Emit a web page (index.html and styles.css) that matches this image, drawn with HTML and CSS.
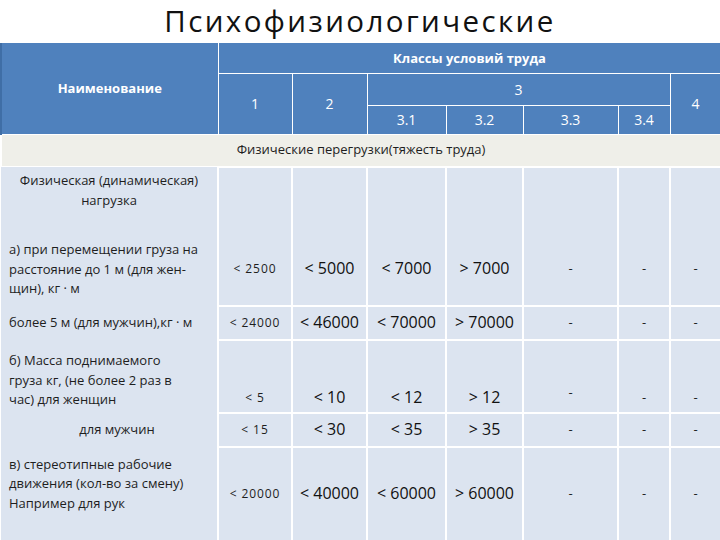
FILE: index.html
```html
<!DOCTYPE html>
<html lang="ru">
<head>
<meta charset="utf-8">
<title>Психофизиологические</title>
<link rel="stylesheet" href="styles.css">
</head>
<body>
<h1 class="title">Психофизиологические</h1>
<table class="grid">
  <colgroup>
    <col class="c-name"><col class="c-1"><col class="c-2"><col class="c-31"><col class="c-32"><col class="c-33"><col class="c-34"><col class="c-4">
  </colgroup>
  <thead>
    <tr class="h-row1">
      <th rowspan="3" class="h-name">Наименование</th>
      <th colspan="7" class="h-classes">Классы условий труда</th>
    </tr>
    <tr class="h-row2">
      <th rowspan="2">1</th>
      <th rowspan="2">2</th>
      <th colspan="4">3</th>
      <th rowspan="2">4</th>
    </tr>
    <tr class="h-row3">
      <th>3.1</th><th>3.2</th><th>3.3</th><th>3.4</th>
    </tr>
  </thead>
  <tbody>
    <tr class="section">
      <td colspan="8">Физические перегрузки(тяжесть труда)</td>
    </tr>
    <tr class="r-1a open-bottom">
      <td class="label centered top">Физическая (динамическая)<br>нагрузка</td>
      <td></td><td></td><td></td><td></td><td></td><td></td><td></td>
    </tr>
    <tr class="r-1b open-top">
      <td class="label">а) при перемещении груза на<br>расстояние до 1 м (для жен-<br>щин), кг · м</td>
      <td class="v-small">&lt; 2500</td>
      <td class="v">&lt; 5000</td>
      <td class="v">&lt; 7000</td>
      <td class="v">&gt; 7000</td>
      <td class="dash">-</td><td class="dash">-</td><td class="dash">-</td>
    </tr>
    <tr class="r-2">
      <td class="label">более 5 м (для мужчин),кг · м</td>
      <td class="v-small">&lt; 24000</td>
      <td class="v">&lt; 46000</td>
      <td class="v">&lt; 70000</td>
      <td class="v">&gt; 70000</td>
      <td class="dash">-</td><td class="dash">-</td><td class="dash">-</td>
    </tr>
    <tr class="r-3 bottom-row">
      <td class="label">б) Масса поднимаемого<br>груза кг, (не более 2 раз в<br>час) для женщин</td>
      <td class="v-small">&lt; 5</td>
      <td class="v">&lt; 10</td>
      <td class="v">&lt; 12</td>
      <td class="v">&gt; 12</td>
      <td class="dash raised">-</td><td class="dash">-</td><td class="dash">-</td>
    </tr>
    <tr class="r-4">
      <td class="label centered shifted">для мужчин</td>
      <td class="v-small">&lt; 15</td>
      <td class="v">&lt; 30</td>
      <td class="v">&lt; 35</td>
      <td class="v">&gt; 35</td>
      <td class="dash">-</td><td class="dash">-</td><td class="dash">-</td>
    </tr>
    <tr class="r-5">
      <td class="label top">в) стереотипные рабочие<br>движения (кол-во за смену)<br>Например для рук</td>
      <td class="v-small">&lt; 20000</td>
      <td class="v">&lt; 40000</td>
      <td class="v">&lt; 60000</td>
      <td class="v">&gt; 60000</td>
      <td class="dash">-</td><td class="dash">-</td><td class="dash">-</td>
    </tr>
  </tbody>
</table>
</body>
</html>
```

FILE: styles.css
```css
html, body {
  margin: 0;
  padding: 0;
  background: #ffffff;
  overflow: hidden;
}

body {
  width: 720px;
  height: 540px;
  font-family: "Open Sans", "Noto Sans", "DejaVu Sans", sans-serif;
  color: #1e1e1e;
}

.title {
  margin: 0 0 2px 0;
  height: 41px;
  font-size: 29.5px;
  line-height: 41px;
  font-weight: 400;
  letter-spacing: 2.4px;
  text-align: center;
  color: #111111;
}

.grid {
  width: 720px;
  table-layout: fixed;
  border-collapse: collapse;
  border-spacing: 0;
}

.c-name { width: 217px; }
.c-1 { width: 74px; }
.c-2 { width: 75px; }
.c-31 { width: 79px; }
.c-32 { width: 77px; }
.c-33 { width: 95px; }
.c-34 { width: 52px; }
.c-4 { width: 51px; }

/* header */
.grid th {
  background: #4f81bd;
  color: #ffffff;
  font-weight: 400;
  font-size: 14px;
  border: 1px solid #ffffff;
  padding: 0;
  text-align: center;
  vertical-align: middle;
}

.grid thead tr:first-child th {
  border-top: none;
}

.grid th.h-name {
  border-left: 2px solid #3f6ea6;
  font-weight: 700;
  font-size: 13px;
}

.grid th.h-classes {
  font-weight: 700;
  font-size: 13px;
}

.h-row1 { height: 30px; }
.h-row2 { height: 32px; }
.h-row3 { height: 29px; }

/* body */
.grid td {
  background: #dce4f0;
  border: 2px solid #ffffff;
  padding: 0;
  text-align: center;
  vertical-align: middle;
  font-size: 13px;
  line-height: 19.5px;
}

.grid tr.section td {
  background: #efefe9;
  height: 31px;
  color: #1e1e1e;
  border-top: 1px solid #f6f4ea;
  border-bottom: 1px solid #ffffff;
}

.grid td.label {
  text-align: left;
  padding-left: 8px;
  border-top: none;
  border-bottom: none;
  border-left: none;
}

.grid td.label.centered {
  text-align: center;
  padding-left: 0;
}

.grid td.label.shifted {
  padding-left: 16px;
}

.grid td.top {
  vertical-align: top;
}

.r-1a { height: 67px; }
.r-1a td.label { padding-top: 4px; }
.r-1b { height: 72px; }
.r-2 { height: 34px; }
.r-3 { height: 73px; }
.r-4 { height: 34px; }
.r-5 { height: 95px; }
.r-5 td.label { padding-top: 8px; }

.grid tr.open-bottom td { border-bottom: none; }
.grid tr.open-top td { border-top: none; }

.grid tr.bottom-row td {
  vertical-align: bottom;
  padding-bottom: 4px;
}

.grid tr.bottom-row td.label {
  padding-bottom: 3px;
}

.grid td.v {
  font-size: 16px;
  color: #111111;
}

.grid td.v-small {
  font-size: 12px;
  letter-spacing: 0.9px;
  color: #1e1e1e;
}

.grid td.dash {
  font-size: 13px;
  color: #222222;
}

.grid tr.bottom-row td.dash.raised {
  padding-bottom: 9px;
}
```
